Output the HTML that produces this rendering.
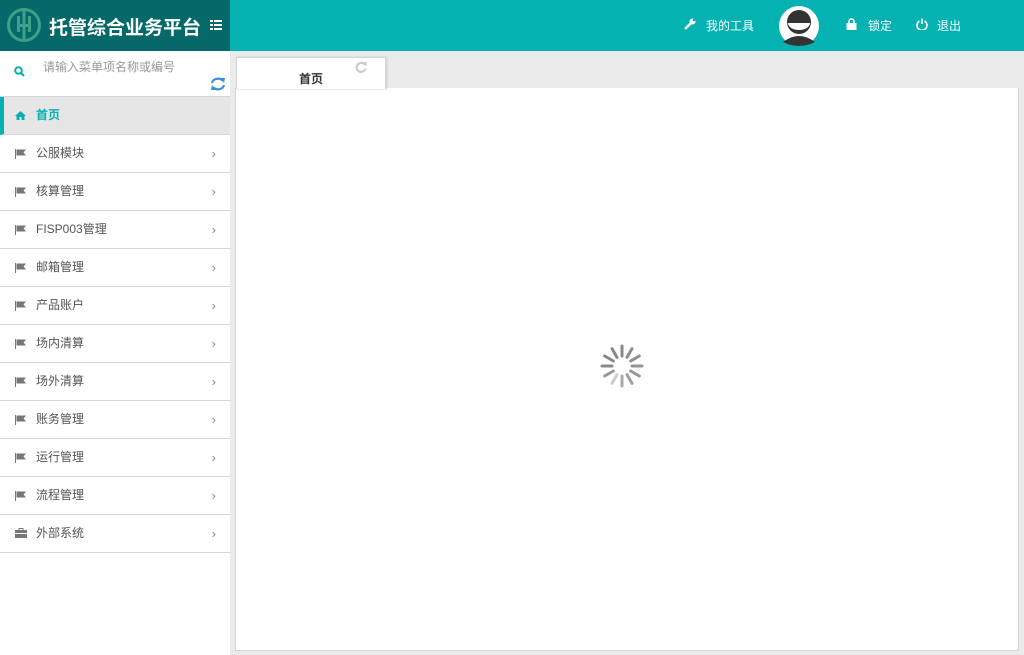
<!DOCTYPE html>
<html><head><meta charset="utf-8"><style>
*{margin:0;padding:0;box-sizing:border-box}
body{width:1024px;height:655px;overflow:hidden;background:#ebebeb;font-family:"Liberation Sans","Noto Sans CJK SC",sans-serif;position:relative}
.hd{position:absolute;left:0;top:0;width:1024px;height:51px;background:#05b2b2}
.logo{position:absolute;left:0;top:0;width:230px;height:51px;background:#05696a}
.logo .t{position:absolute;left:49px;top:13px;color:#fff;font-size:19px;font-weight:bold}
.hi{position:absolute;top:17px;color:#fff;font-size:12px}
.sb{position:absolute;left:0;top:51px;width:230px;height:604px;background:#fff}
.search{height:46px;border-bottom:1px solid #d5d5dc;position:relative}
.search .p{position:absolute;left:43px;top:7px;color:#999;font-size:12px}
.it{height:38px;border-bottom:1px solid #d5d5dc;position:relative;font-size:12px;color:#555;line-height:37px;padding-left:36px}
.it .ic{position:absolute;left:15px;top:14px}
.it .ar{position:absolute;right:14px;top:0;color:#888;font-size:13px}
.act{background:#e6e6e6;color:#05b2b2;font-weight:bold;border-left:4px solid #05b2b2;padding-left:32px}
.tab{position:absolute;left:236px;top:57px;width:150px;height:32px;background:#fff;border:1px solid #d5d5d5;border-bottom:none;box-shadow:1px 0 2px #ccc;text-align:center;font-size:12px;font-weight:bold;color:#333;line-height:42px}
.panel{position:absolute;left:235px;top:88px;width:784px;height:563px;background:#fff;border:1px solid #d5d5d5;border-top:none}
</style></head><body>
<div class="hd">
<div class="logo">
<svg style="position:absolute;left:6px;top:7px" width="36" height="36" viewBox="0 0 36 36"><circle cx="18" cy="18" r="15.5" fill="none" stroke="#3fa08a" stroke-width="3"/><rect x="11" y="9" width="3" height="16" fill="#3fa08a"/><rect x="22" y="9" width="3" height="16" fill="#3fa08a"/><rect x="16.5" y="4" width="3" height="28" fill="#3fa08a"/><rect x="11" y="17" width="14" height="3" fill="#3fa08a"/></svg>
<div class="t">托管综合业务平台</div>
<svg style="position:absolute;left:210px;top:20px" width="12" height="10"><g fill="#fff"><rect x="0" y="0" width="3" height="2"/><rect x="4" y="0" width="8" height="2"/><rect x="0" y="4" width="3" height="2"/><rect x="4" y="4" width="8" height="2"/><rect x="0" y="8" width="3" height="2"/><rect x="4" y="8" width="8" height="2"/></g></svg>
</div>
<svg style="position:absolute;left:684px;top:18px" width="12" height="12" viewBox="0 0 12 12"><path d="M1 11 L7 5" stroke="#fff" stroke-width="2.5"/><circle cx="8.5" cy="3.5" r="3" fill="#fff"/><circle cx="10" cy="2" r="1.3" fill="#05b2b2"/></svg>
<div class="hi" style="left:706px">我的工具</div>
<svg style="position:absolute;left:779px;top:6px" width="40" height="40" viewBox="0 0 40 40"><circle cx="20" cy="20" r="20" fill="#fff"/><circle cx="20" cy="16" r="12" fill="#333"/><path d="M9 17 h22 a11 7 0 0 1 -22 0z" fill="#fff"/><path d="M4 36 Q20 24 36 36 Q20 44 4 36z" fill="#333"/></svg>
<svg style="position:absolute;left:846px;top:18px" width="11" height="12"><path d="M3 5 V3.5 a2.5 2.5 0 0 1 5 0 V5" stroke="#fff" stroke-width="1.6" fill="none"/><rect x="0.5" y="5" width="10" height="7" fill="#fff"/></svg>
<div class="hi" style="left:868px">锁定</div>
<svg style="position:absolute;left:916px;top:18px" width="12" height="12"><path d="M3.5 3 A5 5 0 1 0 8.5 3" stroke="#fff" stroke-width="1.6" fill="none"/><path d="M6 0.5 V6" stroke="#fff" stroke-width="1.6"/></svg>
<div class="hi" style="left:937px">退出</div>
</div>
<div class="sb">
<div class="search">
<svg style="position:absolute;left:14px;top:15px" width="11" height="11"><circle cx="4.5" cy="4.5" r="3.3" stroke="#05b2b2" stroke-width="2" fill="none"/><path d="M7 7 L10 10" stroke="#05b2b2" stroke-width="2.2"/></svg>
<div class="p">请输入菜单项名称或编号</div>
<svg style="position:absolute;left:210px;top:26px" width="16" height="14" viewBox="0 0 16 14"><path d="M2 6 A6 5 0 0 1 13 4" stroke="#3a8ee0" stroke-width="2.2" fill="none"/><path d="M14 8 A6 5 0 0 1 3 10" stroke="#3a8ee0" stroke-width="2.2" fill="none"/><path d="M11 1 L15 1 L14 6z" fill="#3a8ee0"/><path d="M5 13 L1 13 L2 8z" fill="#3a8ee0"/></svg>
</div>
<div class="it act"><svg class="ic" width="11" height="9" style="left:11px"><path d="M5.5 0 L11 5 H9.5 V9 H6.5 V6 H4.5 V9 H1.5 V5 H0z" fill="#05b2b2"/></svg>首页</div>
<div class="it"><svg class="ic" width="11" height="10"><path d="M0.5 0 V10 M1.5 1 H10 L8 3.5 L10 6 H1.5" stroke="#777" fill="#777"/></svg>公服模块<span class="ar">›</span></div>
<div class="it"><svg class="ic" width="11" height="10"><path d="M0.5 0 V10 M1.5 1 H10 L8 3.5 L10 6 H1.5" stroke="#777" fill="#777"/></svg>核算管理<span class="ar">›</span></div>
<div class="it"><svg class="ic" width="11" height="10"><path d="M0.5 0 V10 M1.5 1 H10 L8 3.5 L10 6 H1.5" stroke="#777" fill="#777"/></svg>FISP003管理<span class="ar">›</span></div>
<div class="it"><svg class="ic" width="11" height="10"><path d="M0.5 0 V10 M1.5 1 H10 L8 3.5 L10 6 H1.5" stroke="#777" fill="#777"/></svg>邮箱管理<span class="ar">›</span></div>
<div class="it"><svg class="ic" width="11" height="10"><path d="M0.5 0 V10 M1.5 1 H10 L8 3.5 L10 6 H1.5" stroke="#777" fill="#777"/></svg>产品账户<span class="ar">›</span></div>
<div class="it"><svg class="ic" width="11" height="10"><path d="M0.5 0 V10 M1.5 1 H10 L8 3.5 L10 6 H1.5" stroke="#777" fill="#777"/></svg>场内清算<span class="ar">›</span></div>
<div class="it"><svg class="ic" width="11" height="10"><path d="M0.5 0 V10 M1.5 1 H10 L8 3.5 L10 6 H1.5" stroke="#777" fill="#777"/></svg>场外清算<span class="ar">›</span></div>
<div class="it"><svg class="ic" width="11" height="10"><path d="M0.5 0 V10 M1.5 1 H10 L8 3.5 L10 6 H1.5" stroke="#777" fill="#777"/></svg>账务管理<span class="ar">›</span></div>
<div class="it"><svg class="ic" width="11" height="10"><path d="M0.5 0 V10 M1.5 1 H10 L8 3.5 L10 6 H1.5" stroke="#777" fill="#777"/></svg>运行管理<span class="ar">›</span></div>
<div class="it"><svg class="ic" width="11" height="10"><path d="M0.5 0 V10 M1.5 1 H10 L8 3.5 L10 6 H1.5" stroke="#777" fill="#777"/></svg>流程管理<span class="ar">›</span></div>
<div class="it"><svg class="ic" width="12" height="10" style="top:13px"><rect x="0" y="2" width="12" height="8" fill="#777"/><path d="M4 2 V0.5 H8 V2" stroke="#777" fill="none"/><rect x="0" y="5" width="12" height="1" fill="#fff"/></svg>外部系统<span class="ar">›</span></div>
</div>
<div class="panel"></div>
<div class="tab">首页
<svg style="position:absolute;left:118px;top:3px" width="12" height="12"><path d="M10 4 A4.5 4.5 0 1 0 10.5 7.5" stroke="#ccc" stroke-width="2.2" fill="none"/><path d="M7 1 H11.5 V5.5z" fill="#ccc"/></svg>
</div>
<svg style="position:absolute;left:598px;top:342px" width="48" height="48" viewBox="-24 -24 48 48">
<g stroke-width="3" stroke-linecap="round">
<line x1="0" y1="-10" x2="0" y2="-20" stroke="#888"/>
<line x1="0" y1="-10" x2="0" y2="-20" stroke="#8c8c8c" transform="rotate(30)"/>
<line x1="0" y1="-10" x2="0" y2="-20" stroke="#909090" transform="rotate(60)"/>
<line x1="0" y1="-10" x2="0" y2="-20" stroke="#949494" transform="rotate(90)"/>
<line x1="0" y1="-10" x2="0" y2="-20" stroke="#999" transform="rotate(120)"/>
<line x1="0" y1="-10" x2="0" y2="-20" stroke="#a0a0a0" transform="rotate(150)"/>
<line x1="0" y1="-10" x2="0" y2="-20" stroke="#aaa" transform="rotate(180)"/>
<line x1="0" y1="-10" x2="0" y2="-20" stroke="#ccc" transform="rotate(210)"/>
<line x1="0" y1="-10" x2="0" y2="-20" stroke="#999" transform="rotate(240)"/>
<line x1="0" y1="-10" x2="0" y2="-20" stroke="#8a8a8a" transform="rotate(270)"/>
<line x1="0" y1="-10" x2="0" y2="-20" stroke="#888" transform="rotate(300)"/>
<line x1="0" y1="-10" x2="0" y2="-20" stroke="#888" transform="rotate(330)"/>
</g></svg>
</body></html>
